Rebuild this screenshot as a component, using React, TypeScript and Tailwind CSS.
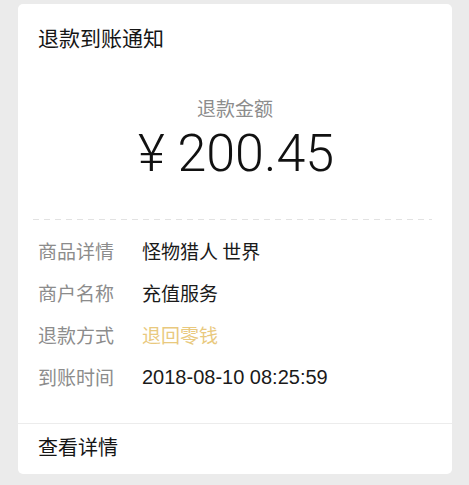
import React from 'react';

const rows: { label: string; value: string; accent?: boolean; latin?: boolean }[] = [
  { label: '商品详情', value: '怪物猎人 世界' },
  { label: '商户名称', value: '充值服务' },
  { label: '退款方式', value: '退回零钱', accent: true },
  { label: '到账时间', value: '2018-08-10 08:25:59', latin: true },
];

const App: React.FC = () => {
  return (
    <div className="w-[469px] h-[485px] bg-[#ebebeb] pt-[4px] pl-[18px] pr-[17px] font-['Noto_Sans_CJK_SC',sans-serif]">
      <div className="h-[470px] bg-white rounded-[5px] flex flex-col">
        <div className="mt-[19px] pl-[20px] text-[21px] leading-[28px] text-[#151515]">退款到账通知</div>

        <div className="mt-[44px] text-center text-[19px] leading-[26px] text-[#8c8c8c]">退款金额</div>
        <div className="mt-[3px] pl-[2px] text-center text-[52px] leading-[60px] font-light text-[#111] font-['Roboto','Liberation_Sans',sans-serif]">
          ¥ 200.45
        </div>

        <div className="mt-[35px] ml-[15px] mr-[20px] h-px bg-[repeating-linear-gradient(to_right,#e2e2e2_0_6px,transparent_6px_11px)]" />

        <div className="mt-[10px] flex flex-col">
          {rows.map((r) => (
            <div key={r.label} className="flex h-[42px] items-center pl-[20px] text-[19px]">
              <span className="w-[104px] text-[#8c8c8c]">{r.label}</span>
              <span
                className={
                  r.accent
                    ? 'text-[#e9c97e]'
                    : r.latin
                    ? "text-[#1a1a1a] text-[20px] font-['Liberation_Sans',sans-serif]"
                    : 'text-[#1a1a1a]'
                }
              >
                {r.value}
              </span>
            </div>
          ))}
        </div>

        <div className="mt-[25px] h-px bg-[#ececec]" />
        <div className="mt-[9px] pl-[20px] text-[20px] leading-[28px] text-[#151515]">查看详情</div>
      </div>
    </div>
  );
};

export default App;
